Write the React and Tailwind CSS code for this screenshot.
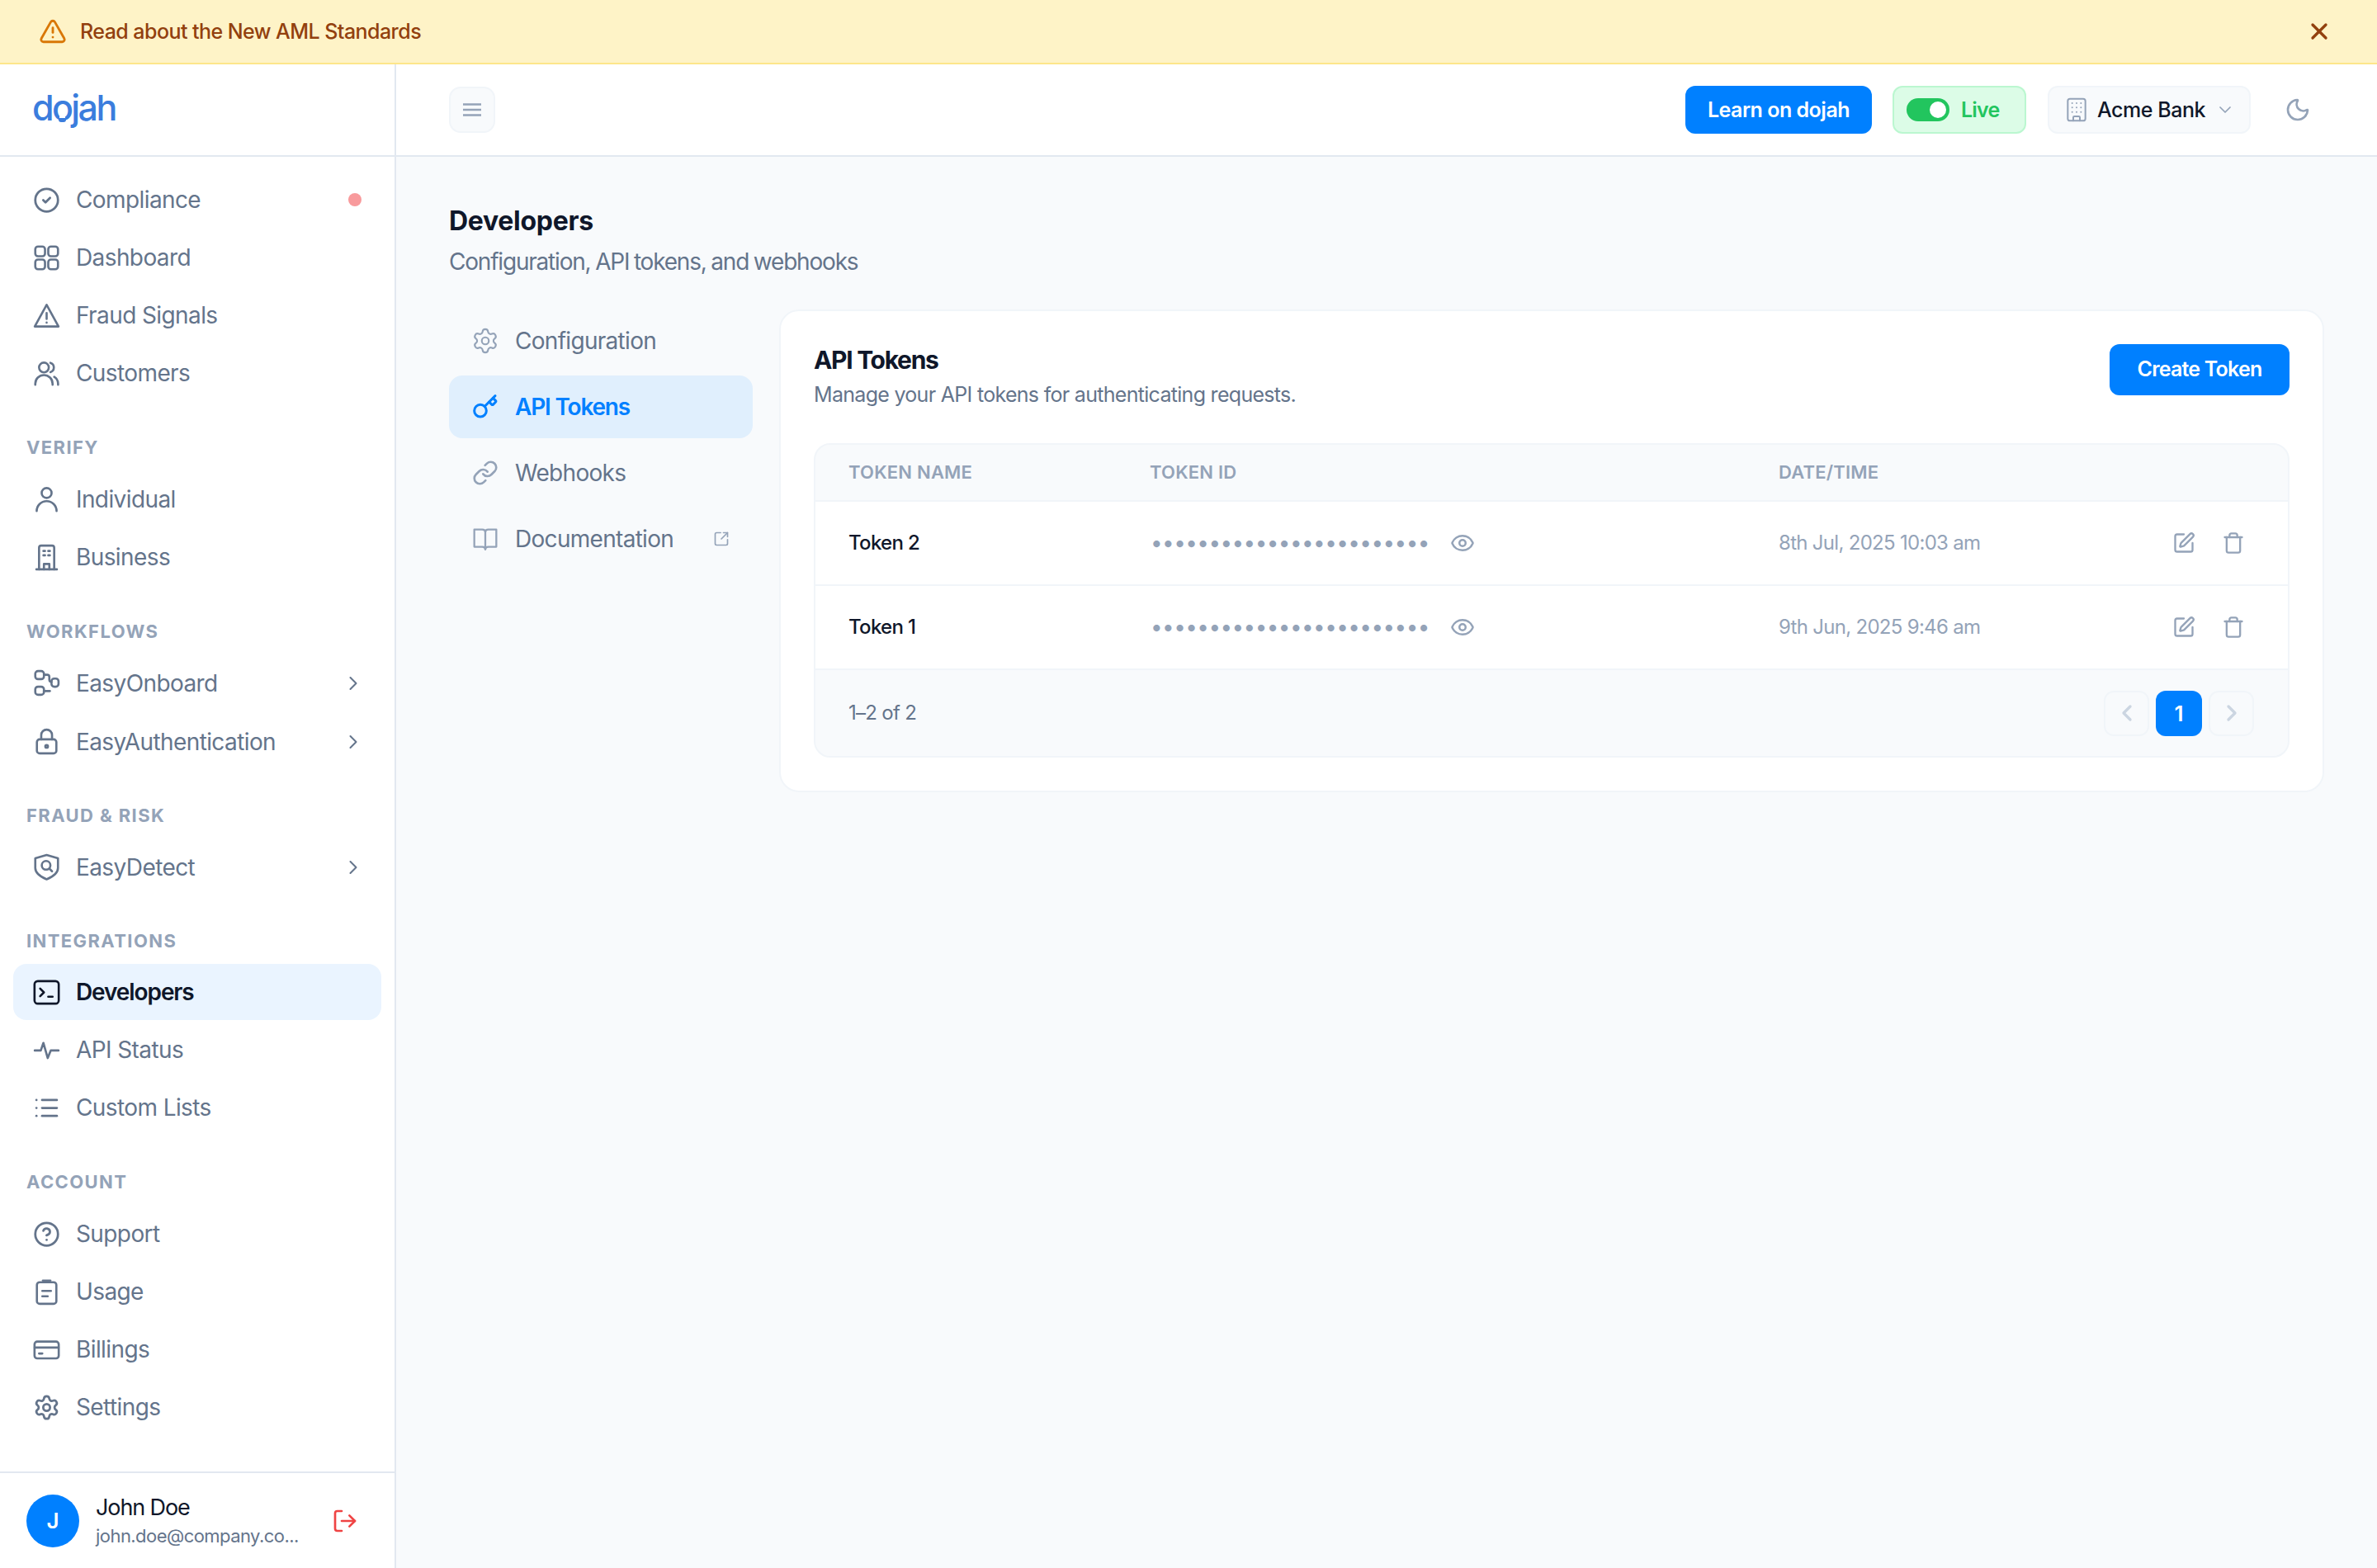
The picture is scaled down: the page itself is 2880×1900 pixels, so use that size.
import {
  Building, ChevronDown, ChevronLeft, ChevronRight, CircleCheck, CircleHelp,
  Eye, Key, Link, List, LogOut, Moon, Settings, SquareArrowOutUpRight, SquarePen,
  Trash, TriangleAlert, X,
} from "lucide-react";

const font = "font-['Inter','Liberation_Sans',sans-serif]";

function Svg({ className = "", sw = 2, children }) {
  return (
    <svg viewBox="-0.6 -0.6 25.2 25.2" fill="none" stroke="currentColor" strokeWidth={sw} strokeLinecap="round" strokeLinejoin="round" className={className}>
      {children}
    </svg>
  );
}

const GridIcon = (p) => (
  <Svg {...p}>
    <rect x="1.5" y="1.5" width="9" height="9" rx="2.5" />
    <rect x="13.5" y="1.5" width="9" height="9" rx="2.5" />
    <rect x="1.5" y="13.5" width="9" height="9" rx="2.5" />
    <rect x="13.5" y="13.5" width="9" height="9" rx="2.5" />
  </Svg>
);
const TriangleIcon = (p) => (
  <Svg {...p}>
    <path d="M12 2 1 22h22L12 2Z" />
    <path d="M12 9.500v5.500M12 18.400v.1" />
  </Svg>
);
const PeopleIcon = (p) => (
  <Svg {...p}>
    <circle cx="9.500" cy="6.500" r="4.500" />
    <path d="M1.500 22.500v-1a8 8 0 0 1 16 0v1" />
    <path d="M15.500 2.200a4.500 4.500 0 0 1 0 8.600" />
    <path d="M19 15.200a7.500 7.500 0 0 1 3.600 6.300v1" />
  </Svg>
);
const PersonIcon = (p) => (
  <Svg {...p}>
    <circle cx="12" cy="5.800" r="4.600" />
    <path d="M2.800 22.500a9.200 9.200 0 0 1 18.400 0" />
  </Svg>
);
const BuildingIcon = (p) => (
  <Svg {...p}>
    <path d="M5 23V3a2 2 0 0 1 2-2h10a2 2 0 0 1 2 2v20" />
    <path d="M2.500 23h19" />
    <path d="M9 6h1.500M13.500 6H15M9 10h1.500M13.500 10H15" />
    <path d="M9.500 23v-5h5v5" />
  </Svg>
);
const FlowIcon = (p) => (
  <Svg {...p}>
    <rect x="1.500" y="1" width="8" height="7.500" rx="2.500" />
    <rect x="1.500" y="15.500" width="8" height="7.500" rx="2.500" />
    <rect x="16.500" y="8" width="6.500" height="7.500" rx="2.500" />
    <path d="M9.500 4.500h3a2 2 0 0 1 2 2V9a2 2 0 0 0 2 2" />
    <path d="M9.500 19.500h5.500" />
  </Svg>
);
const LockIcon = (p) => (
  <Svg {...p}>
    <rect x="3" y="10" width="18" height="13" rx="2.500" />
    <path d="M7 10V6a5 5 0 0 1 10 0v4" />
    <circle cx="12" cy="16.500" r="1.200" />
  </Svg>
);
const ShieldIcon = (p) => (
  <Svg {...p}>
    <path d="M12 1 22.500 4v9c0 5-4.500 8-10.500 10.500C6 21 1.500 18 1.500 13V4L12 1Z" />
    <circle cx="11.500" cy="10.500" r="4" />
    <path d="m14.500 13.500 2.500 2.500" />
  </Svg>
);
const TerminalIcon = (p) => (
  <Svg {...p}>
    <rect x="0.800" y="1.600" width="22.400" height="20.800" rx="3" />
    <path d="m6 8.500 3.500 3.500L6 15.500" />
    <path d="M13.500 16h4" />
  </Svg>
);
const PulseIcon = (p) => (
  <Svg {...p}>
    <path d="M1 12.300h5.600l2.400-7 4 14 2.800-7H23" />
  </Svg>
);
const ClipIcon = (p) => (
  <Svg {...p}>
    <rect x="3" y="3" width="18" height="20" rx="2.500" />
    <path d="M8.500 1.500h7" />
    <path d="M8 11h8M8 16h5" />
  </Svg>
);
const CardIcon = (p) => (
  <Svg {...p}>
    <rect x="0.800" y="4.500" width="22.400" height="15.500" rx="2.500" />
    <path d="M1 10h22M5 15.500h3" />
  </Svg>
);
const BookIcon = (p) => (
  <Svg {...p}>
    <path d="M1.500 3H9c1.700 0 3 1 3 2.500C12 4 13.300 3 15 3h7.500v16.500H15c-1.500 0-3 .8-3 2.500 0-1.700-1.500-2.500-3-2.500H1.500Z" />
    <path d="M12 5.500V22" />
  </Svg>
);
const BarsIcon = (p) => (
  <svg viewBox="0 0 24 24" fill="none" stroke="currentColor" strokeWidth="2.400" strokeLinecap="butt" className={p.className}>
    <path d="M1 5.500h22M1 12h22M1 18.500h22" />
  </svg>
);

const sections = [
  {
    items: [
      { label: "Compliance", icon: CircleCheck, dot: true },
      { label: "Dashboard", icon: GridIcon },
      { label: "Fraud Signals", icon: TriangleIcon },
      { label: "Customers", icon: PeopleIcon },
    ],
  },
  {
    title: "Verify",
    labelClass: "mt-[42px] mb-[15px]",
    items: [
      { label: "Individual", icon: PersonIcon },
      { label: "Business", icon: BuildingIcon },
    ],
  },
  {
    title: "Workflows",
    labelClass: "mt-[42px] mb-[14px]",
    tall: true,
    items: [
      { label: "EasyOnboard", icon: FlowIcon, chevron: true },
      { label: "EasyAuthentication", icon: LockIcon, chevron: true },
    ],
  },
  {
    title: "Fraud & Risk",
    labelClass: "mt-[41px] mb-[14px]",
    tall: true,
    items: [{ label: "EasyDetect", icon: ShieldIcon, chevron: true }],
  },
  {
    title: "Integrations",
    labelClass: "mt-[41px] mb-[14px]",
    items: [
      { label: "Developers", icon: TerminalIcon, active: true },
      { label: "API Status", icon: PulseIcon },
      { label: "Custom Lists", icon: List },
    ],
  },
  {
    title: "Account",
    labelClass: "mt-[42px] mb-[15px]",
    items: [
      { label: "Support", icon: CircleHelp },
      { label: "Usage", icon: ClipIcon },
      { label: "Billings", icon: CardIcon },
      { label: "Settings", icon: Settings },
    ],
  },
];

function NavItem({ item, tall }) {
  const Icon = item.icon;
  return (
    <a
      className={`flex items-center gap-[19px] rounded-[16px] pl-[24px] pr-[28px] text-[28px] ${tall ? "h-[69px]" : "h-[68px]"} ${
        item.active ? "bg-[#eaf4ff] font-semibold tracking-[-1.100px] text-[#0f172a]" : "font-normal tracking-[-0.6px] text-[#64748b]"
      }`}
    >
      <Icon className="h-[33px] w-[33px] shrink-0" />
      <span>{item.label}</span>
      {item.dot && <span className="ml-auto mr-[-4px] h-[16px] w-[16px] rounded-full bg-[#f89a9c]" />}
      {item.chevron && <ChevronRight className="ml-auto mr-[-8px] h-[28px] w-[28px] text-[#64748b]" strokeWidth={1.750} />}
    </a>
  );
}

function Sidebar() {
  return (
    <aside className="flex w-[480px] shrink-0 flex-col border-r-2 border-[#e2e8f0] bg-white">
      <div className="relative flex h-[112px] items-center border-b-2 border-[#e2e8f0] pl-[39px]">
        <span className="pb-[6px] text-[43px] font-medium leading-none tracking-[-2.600px] text-[#3b7ddd]">dojah</span>
        <span className="absolute left-[72px] top-[61px] h-[5px] w-[7px] bg-white" />
        <span className="absolute left-[71px] top-[65px] h-[5px] w-[9px] rounded-b-[3px] bg-[#3b7ddd]" />
      </div>
      <nav className="flex flex-1 flex-col px-[16px] pt-[18px]">
        {sections.map((s, i) => (
          <div key={i}>
            {s.title && (
              <div className={`h-[28px] pl-[16px] text-[22px] font-bold uppercase leading-[28px] tracking-[1.400px] text-[#94a3b8] ${s.labelClass}`}>
                {s.title}
              </div>
            )}
            <div className="flex flex-col gap-[2px]">
              {s.items.map((item) => (
                <NavItem key={item.label} item={item} tall={s.tall} />
              ))}
            </div>
          </div>
        ))}
      </nav>
      <div className="flex h-[117px] items-center border-t-2 border-[#e2e8f0] pl-[32px] pr-[44px]">
        <div className="flex h-[64px] w-[64px] items-center justify-center rounded-full bg-[#0080ff] text-[26px] font-semibold text-white">J</div>
        <div className="ml-[20px] flex min-w-0 flex-col">
          <span className="text-[27px] leading-[36px] tracking-[-1.100px] text-[#0f172a]">John Doe</span>
          <span className="whitespace-nowrap text-[22px] leading-[32px] tracking-[-0.55px] text-[#64748b]">john.doe@company.co...</span>
        </div>
        <LogOut className="ml-auto h-[32px] w-[32px] shrink-0 text-[#ef4444]" />
      </div>
    </aside>
  );
}

function TopBar() {
  return (
    <header className="flex h-[112px] shrink-0 items-center border-b-2 border-[#e2e8f0] bg-white pl-[64px] pr-[80px]">
      <button className="flex h-[56px] w-[56px] items-center justify-center rounded-[14px] border-2 border-[#f1f5f9] bg-[#f8fafc] text-[#94a3b8]">
        <BarsIcon className="h-[24px] w-[24px]" />
      </button>
      <div className="ml-auto flex items-center">
        <button className="flex h-[58px] w-[226px] items-center justify-center rounded-[12px] bg-[#0080ff] pt-[2px] text-[25px] font-semibold tracking-[-0.5px] text-white">
          Learn on dojah
        </button>
        <div className="ml-[25px] flex h-[58px] w-[162px] items-center rounded-[12px] border-2 border-[#bbf7d0] bg-[#dcfce7] pl-[15px]">
          <span className="flex h-[28px] w-[52px] items-center justify-end rounded-full bg-[#22c55e] pr-[4px]">
            <span className="h-[20px] w-[20px] rounded-full bg-white" />
          </span>
          <span className="ml-[14px] pt-[2px] text-[25px] font-semibold tracking-[-0.8px] text-[#22c55e]">Live</span>
        </div>
        <button className="ml-[26px] flex h-[58px] w-[246px] items-center rounded-[12px] border-2 border-[#f1f5f9] bg-[#f8fafc] pl-[17px]">
          <Building className="h-[32px] w-[32px] text-[#94a3b8]" strokeWidth={1.500} />
          <span className="ml-[9px] pt-[2px] text-[25px] font-medium tracking-[-0.45px] text-[#0f172a]">Acme Bank</span>
          <ChevronDown className="ml-[12px] h-[24px] w-[24px] text-[#94a3b8]" strokeWidth={1.750} />
        </button>
        <Moon className="ml-[41px] h-[32px] w-[32px] text-[#94a3b8]" />
      </div>
    </header>
  );
}

const tabs = [
  { label: "Configuration", icon: Settings, iconClass: "h-[34px] w-[34px] ml-[-1px] mr-[-1px]", sw: 1.500 },
  { label: "API Tokens", icon: Key, active: true, iconClass: "h-[32px] w-[32px]", sw: 2.250 },
  { label: "Webhooks", icon: Link, iconClass: "h-[32px] w-[32px]", sw: 2 },
  { label: "Documentation", icon: BookIcon, external: true, iconClass: "h-[32px] w-[32px]", sw: 1.800 },
];

function Tabs() {
  return (
    <div className="flex w-[368px] shrink-0 flex-col gap-[4px]">
      {tabs.map((t) => {
        const Icon = t.icon;
        return (
          <a
            key={t.label}
            className={`flex h-[76px] items-center gap-[20px] rounded-[16px] pl-[28px] text-[28px] ${
              t.active ? "bg-[#e0effd] font-semibold tracking-[-1.200px] text-[#0080ff]" : "tracking-[-0.7px] text-[#64748b]"
            }`}
          >
            {t.icon === BookIcon ? (
              <Icon sw={t.sw} className={`shrink-0 text-[#94a3b8] ${t.iconClass}`} />
            ) : (
              <Icon strokeWidth={t.sw} className={`shrink-0 ${t.iconClass} ${t.active ? "text-[#0080ff]" : "text-[#94a3b8]"}`} />
            )}
            <span>{t.label}</span>
            {t.external && <SquareArrowOutUpRight className="ml-auto mr-[28px] h-[20px] w-[20px] text-[#94a3b8]" />}
          </a>
        );
      })}
    </div>
  );
}

const tokens = [
  { name: "Token 2", date: "8th Jul, 2025 10:03 am" },
  { name: "Token 1", date: "9th Jun, 2025 9:46 am" },
];

function TokenRow({ token }) {
  return (
    <div className="flex h-[102px] items-center border-b-2 border-[#f1f5f9] bg-white pl-[40px] text-[24px]">
      <div className="w-[365px] font-medium tracking-[-0.7px] text-[#0f172a]">{token.name}</div>
      <div className="flex w-[762px] items-center">
        <span className="ml-[1px] text-[26px] leading-none tracking-[-0.55px] text-[#94a3b8]">••••••••••••••••••••••••</span>
        <Eye className="ml-[25px] h-[30px] w-[30px] text-[#94a3b8]" />
      </div>
      <div className="tracking-[-0.7px] text-[#94a3b8]">{token.date}</div>
      <div className="ml-auto flex items-center gap-[32px] pr-[52px] text-[#94a3b8]">
        <SquarePen className="h-[28px] w-[28px]" />
        <Trash className="h-[28px] w-[28px]" />
      </div>
    </div>
  );
}

function TokensCard() {
  return (
    <section className="flex-1 rounded-[24px] border-2 border-[#f1f5f9] bg-white p-[40px]">
      <div className="flex items-start justify-between">
        <div>
          <h2 className="text-[30px] font-bold leading-[38px] tracking-[-1.300px] text-[#0f172a]">API Tokens</h2>
          <p className="mt-[6px] text-[25px] leading-[34px] tracking-[-0.7px] text-[#64748b]">Manage your API tokens for authenticating requests.</p>
        </div>
        <button className="h-[62px] w-[218px] rounded-[12px] bg-[#0080ff] text-[25px] font-semibold tracking-[-0.8px] text-white">Create Token</button>
      </div>
      <div className="mt-[42px] overflow-hidden rounded-[20px] border-2 border-[#f1f5f9] bg-[#f8fafc]">
        <div className="flex h-[69px] items-center border-b-2 border-[#f1f5f9] pl-[40px] text-[22px] font-semibold uppercase tracking-[0.200px] text-[#94a3b8]">
          <div className="w-[365px]">Token Name</div>
          <div className="w-[762px]">Token ID</div>
          <div>Date/Time</div>
        </div>
        {tokens.map((t) => (
          <TokenRow key={t.name} token={t} />
        ))}
        <div className="flex h-[104px] items-center pl-[40px] pr-[41px]">
          <span className="text-[24px] tracking-[-0.7px] text-[#64748b]">1–2 of 2</span>
          <div className="ml-auto flex items-center gap-[8px]">
            <span className="flex h-[55px] w-[55px] items-center justify-center rounded-[12px] border-2 border-[#f1f5f9] text-[#cbd5e1]">
              <ChevronLeft className="h-[32px] w-[32px]" strokeWidth={2.500} />
            </span>
            <span className="flex h-[55px] w-[56px] items-center justify-center rounded-[12px] bg-[#0080ff] text-[26px] font-semibold text-white">1</span>
            <span className="flex h-[55px] w-[55px] items-center justify-center rounded-[12px] border-2 border-[#f1f5f9] text-[#cbd5e1]">
              <ChevronRight className="h-[32px] w-[32px]" strokeWidth={2.500} />
            </span>
          </div>
        </div>
      </div>
    </section>
  );
}

export default function App() {
  return (
    <div className={`flex h-[1900px] w-[2880px] flex-col overflow-hidden bg-[#f8fafc] ${font}`}>
      <div className="flex h-[78px] shrink-0 items-center border-b-2 border-[#fde68a] bg-[#fef3c7] pl-[47px] pr-[54px]">
        <TriangleAlert className="h-[34px] w-[34px] text-[#d97706]" />
        <span className="ml-[16px] pt-[2px] text-[25px] font-medium tracking-[-0.55px] text-[#92400e]">Read about the New AML Standards</span>
        <X className="ml-auto h-[32px] w-[32px] text-[#92400e]" strokeWidth={2.500} />
      </div>
      <div className="flex min-h-0 flex-1">
        <Sidebar />
        <div className="flex min-w-0 flex-1 flex-col">
          <TopBar />
          <main className="flex-1 pl-[64px] pr-[64px] pt-[57px]">
            <h1 className="text-[32px] font-bold leading-[42px] tracking-[-0.3px] text-[#0f172a]">Developers</h1>
            <p className="mt-[8px] text-[28px] leading-[40px] tracking-[-1.200px] text-[#64748b] [word-spacing:-1px]">Configuration, API tokens, and webhooks</p>
            <div className="mt-[38px] flex gap-[32px]">
              <Tabs />
              <TokensCard />
            </div>
          </main>
        </div>
      </div>
    </div>
  );
}
